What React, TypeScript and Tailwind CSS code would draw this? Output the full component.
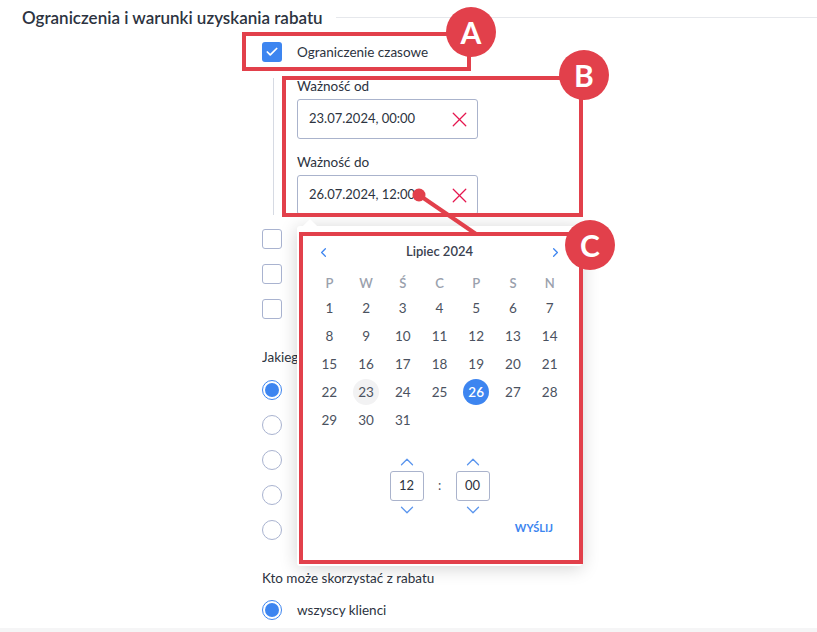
import React from 'react';
import { Check, ChevronLeft, ChevronRight, ChevronUp, ChevronDown, X } from 'lucide-react';

const RED = '#e2404b';

const Checkbox = ({ checked = false }: { checked?: boolean }) =>
  checked ? (
    <span className="flex h-[20px] w-[20px] items-center justify-center rounded-[3px] bg-[#3d85f0]">
      <Check className="h-[14px] w-[14px] text-white" strokeWidth={3} />
    </span>
  ) : (
    <span className="block h-[20px] w-[20px] rounded-[3px] border border-[#a9b3d0] bg-white" />
  );

const Radio = ({ checked = false }: { checked?: boolean }) =>
  checked ? (
    <span className="flex h-[20px] w-[20px] items-center justify-center rounded-full border-[1.5px] border-[#3d85f0] bg-white">
      <span className="block h-[14px] w-[14px] rounded-full bg-[#3d85f0]" />
    </span>
  ) : (
    <span className="block h-[20px] w-[20px] rounded-full border border-[#a9b3d0] bg-white" />
  );

const DateInput = ({ value }: { value: string }) => (
  <div className="flex h-[40px] w-[181px] items-center justify-between rounded-[3px] border border-[#aab3cc] bg-white pl-[11px] pr-[5px]">
    <span className="text-[13px] text-[#2c3340]">{value}</span>
    <X className="h-[25px] w-[25px] text-[#e5174f]" strokeWidth={1.2} />
  </div>
);

const Badge = ({ letter, className }: { letter: string; className: string }) => (
  <div
    className={`absolute flex h-[50px] w-[50px] items-center justify-center rounded-full bg-[#e2404b] text-[30px] font-bold leading-none text-white ${className}`}
  >
    {letter}
  </div>
);

const weekDays = ['P', 'W', 'Ś', 'C', 'P', 'S', 'N'];
const days = Array.from({ length: 31 }, (_, i) => i + 1);

const TimeBox = ({ value }: { value: string }) => (
  <div className="flex w-[34px] flex-col items-center">
    <ChevronUp className="-my-[4px] h-[22px] w-[22px] text-[#5a95ee]" strokeWidth={1.4} />
    <div className="mt-[2px] flex h-[30px] w-[34px] items-center justify-center rounded-[3px] border border-[#aab3cc] text-[13px] text-[#2c3340]">
      {value}
    </div>
    <ChevronDown className="-my-[4px] mt-[-2px] h-[22px] w-[22px] text-[#5a95ee]" strokeWidth={1.4} />
  </div>
);

const Calendar = () => (
  <div className="absolute left-[297px] top-[226px] h-[340px] w-[285px] rounded-[3px] bg-white px-[14px] pt-[16px] shadow-[0_2px_18px_rgba(0,0,0,0.18)]">
    <div className="absolute -top-[5px] left-[8px] h-[10px] w-[10px] rotate-45 bg-white" />
    <div className="flex h-[20px] items-center justify-between px-[5px]">
      <ChevronLeft className="h-[15px] w-[15px] text-[#3d85f0]" strokeWidth={2} />
      <span className="text-[13px] font-semibold text-[#3a4150]">Lipiec 2024</span>
      <ChevronRight className="h-[15px] w-[15px] text-[#3d85f0]" strokeWidth={2} />
    </div>
    <div className="mt-[12px] grid h-[20px] grid-cols-7 items-center text-center text-[13px] font-semibold text-[#9aa1ad]">
      {weekDays.map((d, i) => (
        <span key={i}>{d}</span>
      ))}
    </div>
    <div className="grid grid-cols-7 auto-rows-[28px] text-[13.5px] text-[#4b5260]">
      {days.map((d) => (
        <div key={d} className="flex items-center justify-center">
          {d === 26 ? (
            <span className="flex h-[26px] w-[26px] items-center justify-center rounded-full bg-[#3d85f0] font-semibold text-white">
              {d}
            </span>
          ) : d === 23 ? (
            <span className="flex h-[26px] w-[26px] items-center justify-center rounded-full bg-[#f2f2f3]">{d}</span>
          ) : (
            <span>{d}</span>
          )}
        </div>
      ))}
    </div>
    <div className="mt-[21px] flex items-center justify-center">
      <TimeBox value="12" />
      <span className="w-[32px] text-center text-[13px] text-[#4b5260]">:</span>
      <TimeBox value="00" />
    </div>
    <div className="mt-[3px] flex h-[16px] items-center justify-end pr-[15px]">
      <span className="text-[11px] font-bold text-[#3d85f0]">WYŚLIJ</span>
    </div>
  </div>
);

export default function App() {
  return (
    <div className="relative h-[632px] w-[817px] overflow-hidden bg-white font-['Lato','Noto_Sans',sans-serif] text-[#2c3340]">
      {/* section header */}
      <div className="flex h-[34px] items-center pl-[22px]">
        <h2 className="text-[17px] font-semibold leading-none text-[#2c3340]">Ograniczenia i warunki uzyskania rabatu</h2>
        <div className="ml-[13px] h-px flex-1 bg-[#e6e8ec]" />
      </div>

      <div className="pl-[262px]">
        <label className="mt-[8px] flex h-[20px] items-center gap-[15px]">
          <Checkbox checked />
          <span className="text-[13.5px]">Ograniczenie czasowe</span>
        </label>

        <div className="ml-[11px] mt-[16px] border-l border-[#d6dae3] pl-[23px]">
          <div className="h-[16px] text-[13.5px] leading-[16px]">Ważność od</div>
          <div className="mt-[5px]">
            <DateInput value="23.07.2024, 00:00" />
          </div>
          <div className="mt-[15px] h-[16px] text-[13.5px] leading-[16px]">Ważność do</div>
          <div className="mt-[5px]">
            <DateInput value="26.07.2024, 12:00" />
          </div>
        </div>

        {/* options hidden behind the date picker */}
        <div className="mt-[14px] flex flex-col gap-[15px]">
          <Checkbox />
          <Checkbox />
          <Checkbox />
        </div>

        <div className="mt-[30px] h-[16px] w-[35px] overflow-hidden whitespace-nowrap text-[13.5px] leading-[16px]">Jakiego</div>
        <div className="mt-[15px] flex flex-col gap-[15px]">
          <Radio checked />
          <Radio />
          <Radio />
          <Radio />
          <Radio />
        </div>

        <div className="mt-[30px] h-[16px] text-[13.5px] leading-[16px]">Kto może skorzystać z rabatu</div>
        <label className="mt-[14px] flex h-[20px] items-center gap-[15px]">
          <Radio checked />
          <span className="text-[13.5px]">wszyscy klienci</span>
        </label>
      </div>
      <div className="mt-[8px] h-[12px] bg-[#f5f5f6]" />

      <Calendar />

      {/* annotations */}
      <div className="pointer-events-none absolute left-[242px] top-[32px] h-[39px] w-[229px] border-4 border-[#e2404b]" />
      <div className="pointer-events-none absolute left-[282px] top-[76px] h-[141px] w-[301px] border-4 border-[#e2404b]" />
      <div className="pointer-events-none absolute left-[299px] top-[232px] h-[332px] w-[284px] border-4 border-[#e2404b]" />
      <svg className="pointer-events-none absolute left-0 top-0" width="817" height="632">
        <line x1="419" y1="195" x2="476" y2="234" stroke={RED} strokeWidth="4" />
        <circle cx="419" cy="195" r="6.5" fill={RED} />
      </svg>
      <Badge letter="A" className="left-[446px] top-[7px]" />
      <Badge letter="B" className="left-[559px] top-[50px]" />
      <Badge letter="C" className="left-[565px] top-[220px]" />
    </div>
  );
}
